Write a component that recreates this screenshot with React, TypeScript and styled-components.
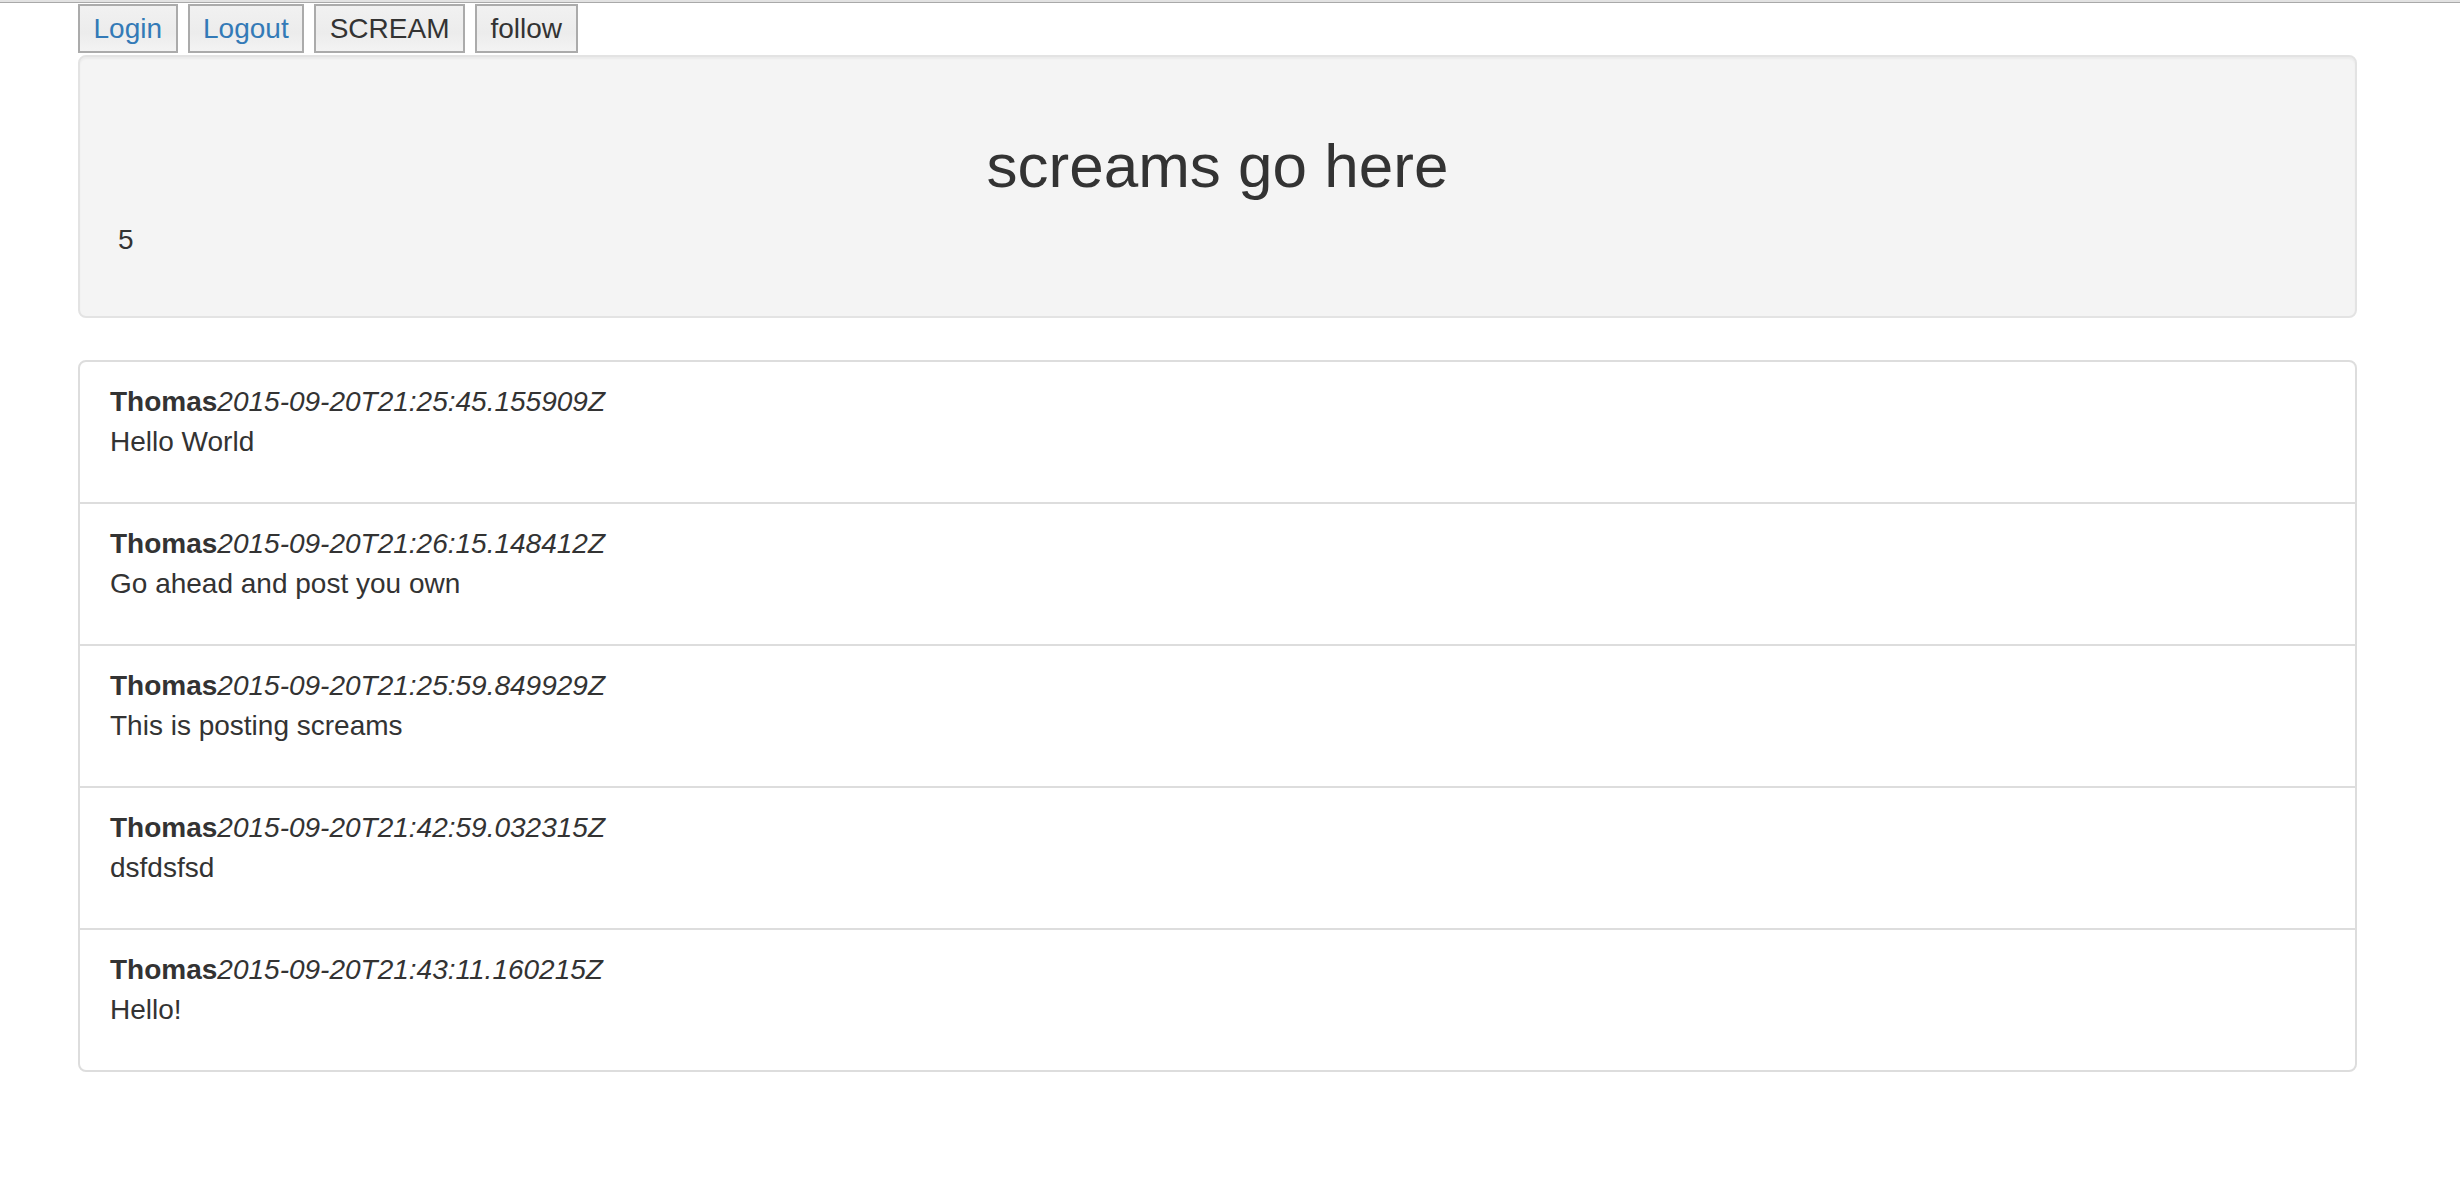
import React from 'react';
import styled, { createGlobalStyle } from 'styled-components';

const GlobalStyle = createGlobalStyle`
  html, body {
    margin: 0;
    padding: 0;
    background: #fff;
  }
  body {
    font-family: "Liberation Sans", Arial, sans-serif;
    font-size: 28px;
    line-height: 40px;
    color: #333;
  }
  * { box-sizing: border-box; }
`;

const TopEdge = styled.div`
  height: 3px;
  background: #e2e2e2;
  border-bottom: 1px solid #a9a9a9;
`;

const Page = styled.div`
  width: 2279px;
  margin-left: 78px;
`;

const Toolbar = styled.div`
  display: flex;
  gap: 10px;
  margin-top: 1px;
  height: 51px;
`;

const ToolButton = styled.button<{ $link?: boolean }>`
  height: 49px;
  padding: 0 13.5px;
  border: 2px solid #ababab;
  border-radius: 0;
  background: linear-gradient(#f1f1f1, #ececec 60%, #f3f3f3);
  font-family: "Liberation Sans", Arial, sans-serif;
  font-size: 28px;
  line-height: 32px;
  color: ${p => (p.$link ? '#337ab7' : '#333')};
  cursor: pointer;
`;

const Well = styled.section`
  padding: 38px;
  background: #f4f4f4;
  border: 2px solid #e3e3e3;
  border-radius: 8px;
  box-shadow: inset 0 2px 2px rgba(0, 0, 0, 0.04);
`;

const Title = styled.h1`
  margin: 37px 0 20px;
  font-size: 62px;
  line-height: 68px;
  font-weight: 500;
  text-align: center;
  color: #333;
`;

const Count = styled.p`
  margin: 0 0 18px;
`;

const List = styled.ul`
  list-style: none;
  margin: 42px 0 0;
  padding: 0;
`;

const Item = styled.li`
  padding: 20px 30px;
  border: 2px solid #ddd;
  margin-bottom: -2px;
  background: #fff;

  &:first-child {
    border-top-left-radius: 8px;
    border-top-right-radius: 8px;
  }
  &:last-child {
    margin-bottom: 0;
    border-bottom-left-radius: 8px;
    border-bottom-right-radius: 8px;
  }
`;

const Meta = styled.div`
  height: 40px;
`;

const Author = styled.b`
  font-weight: 700;
`;

const Stamp = styled.i`
  font-style: italic;
`;

const Body = styled.p`
  margin: 0 0 20px;
`;

const screams = [
  { user: 'Thomas', at: '2015-09-20T21:25:45.155909Z', text: 'Hello World' },
  { user: 'Thomas', at: '2015-09-20T21:26:15.148412Z', text: 'Go ahead and post you own' },
  { user: 'Thomas', at: '2015-09-20T21:25:59.849929Z', text: 'This is posting screams' },
  { user: 'Thomas', at: '2015-09-20T21:42:59.032315Z', text: 'dsfdsfsd' },
  { user: 'Thomas', at: '2015-09-20T21:43:11.160215Z', text: 'Hello!' },
];

export default function App() {
  return (
    <>
      <GlobalStyle />
      <TopEdge />
      <Page>
        <Toolbar>
          <ToolButton $link>Login</ToolButton>
          <ToolButton $link>Logout</ToolButton>
          <ToolButton>SCREAM</ToolButton>
          <ToolButton>follow</ToolButton>
        </Toolbar>
        <Well>
          <Title>screams go here</Title>
          <Count>5</Count>
        </Well>
        <List>
          {screams.map(s => (
            <Item key={s.at}>
              <Meta>
                <Author>{s.user}</Author>
                <Stamp>{s.at}</Stamp>
              </Meta>
              <Body>{s.text}</Body>
            </Item>
          ))}
        </List>
      </Page>
    </>
  );
}
